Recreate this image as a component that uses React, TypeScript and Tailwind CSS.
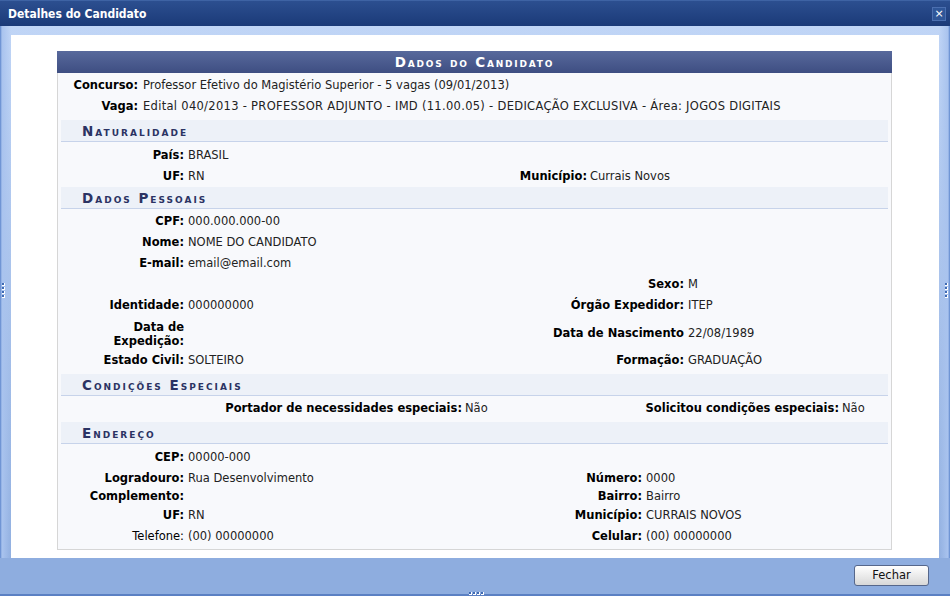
import React from 'react'

const base = "font-['Verdana','DejaVu_Sans',sans-serif] text-[11.5px] text-[#222]"

function SectionTitle({ children }: { children: React.ReactNode }) {
  return (
    <div className="mx-[3px] flex h-[22px] items-center border-b border-[#c7d3ea] bg-[#edf1f8] pl-[21px] pt-[1px]">
      <span className="text-[13.5px] font-bold tracking-[2px] text-[#2b3363] [font-variant-caps:small-caps]">
        {children}
      </span>
    </div>
  )
}

function Grip({ vertical }: { vertical?: boolean }) {
  return (
    <div className={vertical ? 'flex flex-col gap-[1px]' : 'flex gap-[1px]'}>
      {[0, 1, 2, 3].map((i) => (
        <div key={i} className="h-[3px] w-[3px] border-r border-b border-white bg-[#3f6ab3]" />
      ))}
    </div>
  )
}

export default function App() {
  return (
    <div className={`${base} relative flex h-[596px] w-[950px] flex-col overflow-hidden`}>
      {/* Title bar */}
      <div className="flex h-[26px] items-center justify-between border-t border-[#3e63a4] bg-gradient-to-b from-[#2c4f90] to-[#1b3a78] pl-[8px] pr-[4px]">
        <span className="font-['DejaVu_Sans_Condensed','DejaVu_Sans',sans-serif] text-[12px] font-bold text-white">
          Detalhes do Candidato
        </span>
        <div className="flex h-[14px] w-[14px] items-center justify-center border border-[#4b6fb0] bg-[#2f5698] text-[11px] leading-none text-white">
          ×
        </div>
      </div>

      {/* Frame */}
      <div className="flex flex-1 flex-col bg-gradient-to-b from-[#c0d5f6] to-[#8eaddf]">
        <div className="flex flex-1 px-[11px] pt-[9px] [background:linear-gradient(to_right,#5d86cc_0px,#a9c3ee_2px,transparent_11px,transparent_939px,#a9c3ee_948px,#5d86cc_950px)]">
          <div className="flex-1 bg-white pl-[46px] pr-[47px] pt-[16px]">
            <div className="border-x border-b border-[#d6d6d6] bg-[#f8f9fc] pb-[4px]">
              {/* Table header */}
              <div className="-mx-px flex h-[22px] items-center justify-center bg-gradient-to-b from-[#58699c] to-[#3e4e82] pt-[1px]">
                <span className="text-[13.5px] font-bold tracking-[1.8px] text-white [font-variant-caps:small-caps]">
                  Dados do Candidato
                </span>
              </div>

              <div className="pt-[1px]">
                <div className="flex h-[21px] items-center pt-[3px]">
                  <div className="w-[80px] text-right font-bold text-black">Concurso:</div>
                  <div className="pl-[5px]">Professor Efetivo do Magistério Superior - 5 vagas (09/01/2013)</div>
                </div>
                <div className="flex h-[21px] items-center pt-[3px]">
                  <div className="w-[80px] text-right font-bold text-black">Vaga:</div>
                  <div className="pl-[5px] tracking-[0.3px]">
                    Edital 040/2013 - PROFESSOR ADJUNTO - IMD (11.00.05) - DEDICAÇÃO EXCLUSIVA - Área: JOGOS DIGITAIS
                  </div>
                </div>
              </div>

              {/* Naturalidade */}
              <div className="mt-[4px]">
                <SectionTitle>Naturalidade</SectionTitle>
                <div className="pt-[2px]">
                  <div className="flex h-[21px] items-center pt-[3px]">
                    <div className="w-[126px] text-right font-bold text-black">País:</div>
                    <div className="pl-[4px]">BRASIL</div>
                  </div>
                  <div className="flex h-[21px] items-center pt-[3px]">
                    <div className="w-[126px] text-right font-bold text-black">UF:</div>
                    <div className="w-[250px] pl-[4px]">RN</div>
                    <div className="w-[153px] text-right font-bold text-black">Município:</div>
                    <div className="pl-[3px]">Currais Novos</div>
                  </div>
                </div>
              </div>

              {/* Dados Pessoais */}
              <div className="mt-[1px]">
                <SectionTitle>Dados Pessoais</SectionTitle>
                <div className="pt-[1px]">
                  <div className="flex h-[21px] items-center pt-[3px]">
                    <div className="w-[126px] text-right font-bold text-black">CPF:</div>
                    <div className="pl-[4px]">000.000.000-00</div>
                  </div>
                  <div className="flex h-[21px] items-center pt-[3px]">
                    <div className="w-[126px] text-right font-bold text-black">Nome:</div>
                    <div className="pl-[4px]">NOME DO CANDIDATO</div>
                  </div>
                  <div className="flex h-[21px] items-center pt-[3px]">
                    <div className="w-[126px] text-right font-bold text-black">E-mail:</div>
                    <div className="pl-[4px]">email@email.com</div>
                  </div>
                  <div className="flex h-[21px] items-center pt-[3px]">
                    <div className="w-[126px]" />
                    <div className="w-[250px]" />
                    <div className="w-[250px] text-right font-bold text-black">Sexo:</div>
                    <div className="pl-[4px]">M</div>
                  </div>
                  <div className="flex h-[21px] items-center pt-[3px]">
                    <div className="w-[126px] text-right font-bold text-black">Identidade:</div>
                    <div className="w-[250px] pl-[4px]">000000000</div>
                    <div className="w-[250px] text-right font-bold text-black">Órgão Expedidor:</div>
                    <div className="pl-[4px]">ITEP</div>
                  </div>
                  <div className="flex h-[34px] items-center pt-[3px]">
                    <div className="w-[126px] pl-[31px] text-right font-bold leading-[14px] text-black">
                      Data de Expedição:
                    </div>
                    <div className="w-[250px] pl-[4px]" />
                    <div className="w-[250px] text-right font-bold text-black">Data de Nascimento</div>
                    <div className="pl-[4px]">22/08/1989</div>
                  </div>
                  <div className="flex h-[21px] items-center pt-[3px]">
                    <div className="w-[126px] text-right font-bold text-black">Estado Civil:</div>
                    <div className="w-[250px] pl-[4px]">SOLTEIRO</div>
                    <div className="w-[250px] text-right font-bold text-black">Formação:</div>
                    <div className="pl-[4px]">GRADUAÇÃO</div>
                  </div>
                </div>
              </div>

              {/* Condições Especiais */}
              <div className="mt-[4px]">
                <SectionTitle>Condições Especiais</SectionTitle>
                <div className="flex h-[22px] items-center pt-[3px]">
                  <div className="w-[404px] text-right font-bold text-black">Portador de necessidades especiais:</div>
                  <div className="w-[100px] pl-[3px]">Não</div>
                  <div className="w-[277px] text-right font-bold text-black">Solicitou condições especiais:</div>
                  <div className="pl-[3px]">Não</div>
                </div>
              </div>

              {/* Endereço */}
              <div className="mt-[4px]">
                <SectionTitle>Endereço</SectionTitle>
                <div className="pt-[2px]">
                  <div className="flex h-[21px] items-center pt-[3px]">
                    <div className="w-[126px] text-right font-bold text-black">CEP:</div>
                    <div className="pl-[4px]">00000-000</div>
                  </div>
                  <div className="flex h-[20px] items-center pt-[3px]">
                    <div className="w-[126px] text-right font-bold text-black">Logradouro:</div>
                    <div className="w-[250px] pl-[4px]">Rua Desenvolvimento</div>
                    <div className="w-[208px] text-right font-bold text-black">Número:</div>
                    <div className="pl-[4px]">0000</div>
                  </div>
                  <div className="flex h-[17px] items-center pt-[3px]">
                    <div className="w-[126px] text-right font-bold text-black">Complemento:</div>
                    <div className="w-[250px] pl-[4px]" />
                    <div className="w-[208px] text-right font-bold text-black">Bairro:</div>
                    <div className="pl-[4px]">Bairro</div>
                  </div>
                  <div className="flex h-[21px] items-center pt-[3px]">
                    <div className="w-[126px] text-right font-bold text-black">UF:</div>
                    <div className="w-[250px] pl-[4px]">RN</div>
                    <div className="w-[208px] text-right font-bold text-black">Município:</div>
                    <div className="pl-[4px]">CURRAIS NOVOS</div>
                  </div>
                  <div className="flex h-[20px] items-center pt-[3px]">
                    <div className="w-[126px] text-right text-black">Telefone:</div>
                    <div className="w-[250px] pl-[4px]">(00) 00000000</div>
                    <div className="w-[208px] text-right font-bold text-black">Celular:</div>
                    <div className="pl-[4px]">(00) 00000000</div>
                  </div>
                </div>
              </div>
            </div>
          </div>
        </div>

        {/* Footer */}
        <div className="flex h-[38px] items-start justify-end border-b-2 border-[#5b80c3] bg-[#8eaddf] pr-[21px] pt-[7px]">
          <button className="h-[21px] w-[75px] rounded-[3px] border border-[#56678b] bg-gradient-to-b from-[#ffffff] to-[#d8d8d8] text-[11.5px] text-[#111]">
            Fechar
          </button>
        </div>
      </div>

      {/* Resize grips */}
      <div className="absolute left-[2px] top-[283px]">
        <Grip vertical />
      </div>
      <div className="absolute right-[2px] top-[283px]">
        <Grip vertical />
      </div>
      <div className="absolute bottom-[1px] left-[469px]">
        <Grip />
      </div>
    </div>
  )
}
